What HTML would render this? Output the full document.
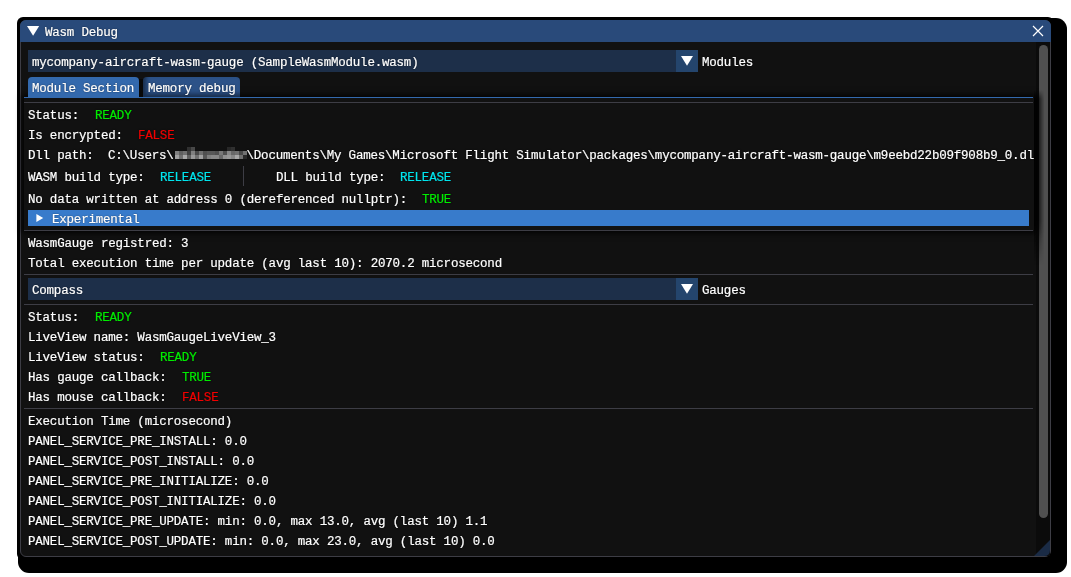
<!DOCTYPE html>
<html><head><meta charset="utf-8"><style>
html,body{margin:0;padding:0;}
body{width:1071px;height:577px;background:#fff;position:relative;overflow:hidden;}
div{position:absolute;box-sizing:border-box;}
.t{white-space:pre;-webkit-font-smoothing:antialiased;will-change:transform;font:12.5px/16px "Liberation Mono",monospace;letter-spacing:-0.21px;color:#fff;-webkit-text-stroke:0.2px currentColor;text-shadow:0 0 1.5px rgba(0,0,0,.7);}
#shA{left:17px;top:17px;width:1037px;height:543px;background:#000;border-radius:6px;}
#shB{left:18px;top:18px;width:1049px;height:555px;background:#000;border-radius:11px;}
#win{left:20px;top:20px;width:1031px;height:537px;background:#111111;border:1px solid #3d3d45;border-radius:6px;overflow:hidden;}
#title{left:20px;top:20px;width:1031px;height:22px;background:#294a7a;border-radius:6px 6px 0 0;}
.combo{left:28px;width:670px;height:22px;background:#1d2f49;}
.cbtn{left:676px;width:22px;height:22px;background:#24456d;}
.tab{top:77px;height:20px;border-radius:4px 4px 0 0;}
.sep{left:24px;width:1009px;height:1px;background:#3d3d45;}
#sbtrack{left:1036px;top:42px;width:14px;height:514px;background:#0b0b0b;}
#sbgrab{left:1039px;top:45px;width:9px;height:473px;background:#505050;border-radius:5px;}
</style></head><body>
<div id="shB"></div>
<div id="shA"></div>
<div id="win"></div>
<div id="title"></div>
<svg style="position:absolute;left:0;top:0" width="1071" height="577">
<polygon points="27,26 39.2,26 33.1,35.8" fill="#fff"/>
<path d="M1033 26 L1043 36 M1043 26 L1033 36" stroke="#fff" stroke-width="1.2"/>
</svg>
<div id="sbtrack"></div>
<div id="sbgrab"></div>
<div style="left:1034px;top:90px;width:14px;height:175px;background:linear-gradient(to right,rgba(0,0,0,.75),rgba(0,0,0,.5) 40%,rgba(0,0,0,0) 75%);-webkit-mask-image:linear-gradient(to bottom,transparent,#000 5%,#000 75%,transparent)"></div>
<div style="left:24px;top:97px;width:1010px;height:134px;background:#111;box-shadow:0 0 6px 2px rgba(0,0,0,.9)"></div>
<div class="combo" style="top:50px"></div>
<div class="cbtn" style="top:50px"></div>
<div class="tab" style="left:28px;width:111px;background:#3369ad"></div>
<div style="left:139px;top:79px;width:5px;height:18px;background:#080808"></div>
<div class="tab" style="left:143px;width:97px;background:#2c5288;box-shadow:inset 3px -3px 4px rgba(0,0,0,.45)"></div>
<div style="left:24px;top:97px;width:1009px;height:1px;background:#3369ad"></div>
<div class="sep" style="top:102px"></div>
<div style="left:28px;top:210px;width:1001px;height:16px;background:#387bcb"></div>
<div class="sep" style="top:230px"></div>
<div style="left:243px;top:166px;width:1px;height:20px;background:#3d3d45"></div>
<div class="sep" style="top:274px"></div>
<div class="combo" style="top:278px"></div>
<div class="cbtn" style="top:278px"></div>
<div class="sep" style="top:304px"></div>
<div class="sep" style="top:408px"></div>
<svg style="position:absolute;left:0;top:0" width="1071" height="577">
<polygon points="681,56 693,56 687,65.7" fill="#fff"/>
<polygon points="681,284 693,284 687,293.7" fill="#fff"/>
<polygon points="36.4,214 43.2,218 36.4,222" fill="#fff"/>
<path d="M1034 556 L1050 540 L1050 550 Q1050 556 1044 556 Z" fill="#1a2b45"/>
</svg>
<div class="t" style="left:45px;top:25px">Wasm Debug</div>
<div class="t" style="left:32px;top:55px">mycompany-aircraft-wasm-gauge (SampleWasmModule.wasm)</div>
<div class="t" style="left:702px;top:55px">Modules</div>
<div class="t" style="left:32px;top:81px">Module Section</div>
<div class="t" style="left:148px;top:81px">Memory debug</div>
<div class="t" style="left:28px;top:108px">Status:</div>
<div class="t" style="left:95px;top:108px;color:#00ec00">READY</div>
<div class="t" style="left:28px;top:128px">Is encrypted:</div>
<div class="t" style="left:138px;top:128px;color:#f20000">FALSE</div>
<div class="t" style="left:28px;top:148px">Dll path:</div>
<div class="t" style="left:108px;top:148px">C:\Users\          \Documents\My Games\Microsoft Flight Simulator\packages\mycompany-aircraft-wasm-gauge\m9eebd22b09f908b9_0.dl</div>
<div class="t" style="left:28px;top:170px">WASM build type:</div>
<div class="t" style="left:160px;top:170px;color:#00e5ee">RELEASE</div>
<div class="t" style="left:276px;top:170px">DLL build type:</div>
<div class="t" style="left:400px;top:170px;color:#00e5ee">RELEASE</div>
<div class="t" style="left:28px;top:192px">No data written at address 0 (dereferenced nullptr):</div>
<div class="t" style="left:422px;top:192px;color:#00ec00">TRUE</div>
<div class="t" style="left:52px;top:212px">Experimental</div>
<div class="t" style="left:28px;top:236px">WasmGauge registred: 3</div>
<div class="t" style="left:28px;top:256px">Total execution time per update (avg last 10): 2070.2 microsecond</div>
<div class="t" style="left:32px;top:283px">Compass</div>
<div class="t" style="left:702px;top:283px">Gauges</div>
<div class="t" style="left:28px;top:310px">Status:</div>
<div class="t" style="left:95px;top:310px;color:#00ec00">READY</div>
<div class="t" style="left:28px;top:330px">LiveView name: WasmGaugeLiveView_3</div>
<div class="t" style="left:28px;top:350px">LiveView status:</div>
<div class="t" style="left:160px;top:350px;color:#00ec00">READY</div>
<div class="t" style="left:28px;top:370px">Has gauge callback:</div>
<div class="t" style="left:182px;top:370px;color:#00ec00">TRUE</div>
<div class="t" style="left:28px;top:390px">Has mouse callback:</div>
<div class="t" style="left:182px;top:390px;color:#f20000">FALSE</div>
<div class="t" style="left:28px;top:414px">Execution Time (microsecond)</div>
<div class="t" style="left:28px;top:434px">PANEL_SERVICE_PRE_INSTALL: 0.0</div>
<div class="t" style="left:28px;top:454px">PANEL_SERVICE_POST_INSTALL: 0.0</div>
<div class="t" style="left:28px;top:474px">PANEL_SERVICE_PRE_INITIALIZE: 0.0</div>
<div class="t" style="left:28px;top:494px">PANEL_SERVICE_POST_INITIALIZE: 0.0</div>
<div class="t" style="left:28px;top:514px">PANEL_SERVICE_PRE_UPDATE: min: 0.0, max 13.0, avg (last 10) 1.1</div>
<div class="t" style="left:28px;top:534px">PANEL_SERVICE_POST_UPDATE: min: 0.0, max 23.0, avg (last 10) 0.0</div>
<svg style="position:absolute;left:0;top:0" width="1071" height="577"><rect x="187" y="147" width="4" height="4" fill="rgb(48,48,48)"/><rect x="191" y="147" width="4" height="4" fill="rgb(72,72,72)"/><rect x="227" y="147" width="4" height="4" fill="rgb(40,40,40)"/><rect x="231" y="147" width="4" height="4" fill="rgb(48,48,48)"/><rect x="175" y="151" width="4" height="4" fill="rgb(128,128,128)"/><rect x="179" y="151" width="4" height="4" fill="rgb(96,96,96)"/><rect x="183" y="151" width="4" height="4" fill="rgb(112,112,112)"/><rect x="187" y="151" width="4" height="4" fill="rgb(64,64,64)"/><rect x="191" y="151" width="4" height="4" fill="rgb(128,128,128)"/><rect x="195" y="151" width="4" height="4" fill="rgb(72,72,72)"/><rect x="199" y="151" width="4" height="4" fill="rgb(112,112,112)"/><rect x="203" y="151" width="4" height="4" fill="rgb(80,80,80)"/><rect x="207" y="151" width="4" height="4" fill="rgb(88,88,88)"/><rect x="211" y="151" width="4" height="4" fill="rgb(88,88,88)"/><rect x="215" y="151" width="4" height="4" fill="rgb(80,80,80)"/><rect x="219" y="151" width="4" height="4" fill="rgb(120,120,120)"/><rect x="223" y="151" width="4" height="4" fill="rgb(80,80,80)"/><rect x="227" y="151" width="4" height="4" fill="rgb(136,136,136)"/><rect x="231" y="151" width="4" height="4" fill="rgb(104,104,104)"/><rect x="235" y="151" width="4" height="4" fill="rgb(112,112,112)"/><rect x="239" y="151" width="4" height="4" fill="rgb(72,72,72)"/><rect x="243" y="151" width="4" height="4" fill="rgb(112,112,112)"/><rect x="175" y="155" width="4" height="4" fill="rgb(160,160,160)"/><rect x="179" y="155" width="4" height="4" fill="rgb(112,112,112)"/><rect x="183" y="155" width="4" height="4" fill="rgb(168,168,168)"/><rect x="187" y="155" width="4" height="4" fill="rgb(96,96,96)"/><rect x="191" y="155" width="4" height="4" fill="rgb(152,152,152)"/><rect x="195" y="155" width="4" height="4" fill="rgb(112,112,112)"/><rect x="199" y="155" width="4" height="4" fill="rgb(160,160,160)"/><rect x="203" y="155" width="4" height="4" fill="rgb(88,88,88)"/><rect x="207" y="155" width="4" height="4" fill="rgb(128,128,128)"/><rect x="211" y="155" width="4" height="4" fill="rgb(136,136,136)"/><rect x="215" y="155" width="4" height="4" fill="rgb(136,136,136)"/><rect x="219" y="155" width="4" height="4" fill="rgb(104,104,104)"/><rect x="223" y="155" width="4" height="4" fill="rgb(144,144,144)"/><rect x="227" y="155" width="4" height="4" fill="rgb(152,152,152)"/><rect x="231" y="155" width="4" height="4" fill="rgb(136,136,136)"/><rect x="235" y="155" width="4" height="4" fill="rgb(168,168,168)"/><rect x="239" y="155" width="4" height="4" fill="rgb(112,112,112)"/><rect x="243" y="155" width="4" height="4" fill="rgb(40,40,40)"/></svg>
</body></html>
